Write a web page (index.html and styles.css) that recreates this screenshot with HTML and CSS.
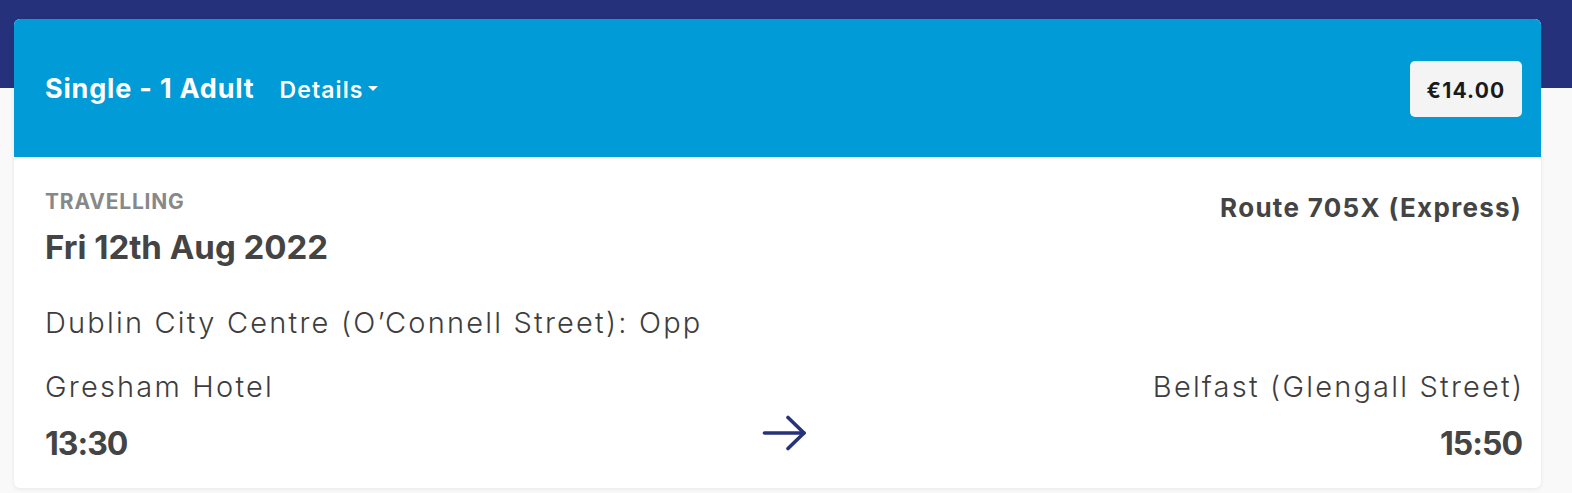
FILE: index.html
```html
<!DOCTYPE html>
<html lang="en">
<head>
<meta charset="utf-8">
<title>Journey</title>
<link rel="stylesheet" href="styles.css">
</head>
<body>
<div class="page">
  <div class="card">
    <div class="card-header">
      <div class="ticket">
        <span class="ticket-title">Single - 1 Adult</span>
        <span class="details">Details<span class="caret"></span></span>
      </div>
      <div class="price">€14.00</div>
    </div>
    <div class="card-body">
      <div class="top-row">
        <div class="when">
          <div class="label">TRAVELLING</div>
          <div class="date">Fri 12th Aug 2022</div>
        </div>
        <div class="route">Route 705X (Express)</div>
      </div>
      <div class="journey">
        <div class="stop">
          <div class="stop-name">Dublin City Centre (O’Connell Street): Opp Gresham Hotel</div>
          <div class="time">13:30</div>
        </div>
        <div class="arrow">
          <svg width="44" height="36" viewBox="0 0 44 36" fill="none" stroke="#263279" stroke-width="3.6" stroke-linecap="round" stroke-linejoin="round">
            <line x1="2.5" y1="18" x2="42" y2="18"/>
            <polyline points="26,2.5 42,18 26,33.5"/>
          </svg>
        </div>
        <div class="stop stop-end">
          <div class="stop-name">Belfast (Glengall Street)</div>
          <div class="time">15:50</div>
        </div>
      </div>
    </div>
  </div>
</div>
</body>
</html>
```
FILE: styles.css
```css
* { box-sizing: border-box; }
html, body { margin: 0; padding: 0; }
body {
  font-family: "Inter", "Liberation Sans", sans-serif;
  color: #444;
  background: #f9f9f9;
}
.page {
  height: 493px;
  background: linear-gradient(#25317b 0, #25317b 88px, #f9f9f9 88px);
  padding: 19px 31px 0 14px;
}
.card {
  background: #fff;
  border-radius: 6px;
  box-shadow: 0 1px 4px rgba(0,0,0,0.08);
  overflow: hidden;
}
.card-header {
  background: #019bd7;
  height: 138px;
  padding: 0 19px 0 31px;
  display: flex;
  align-items: center;
  justify-content: space-between;
}
.ticket {
  display: flex;
  align-items: baseline;
  gap: 25px;
  color: #fff;
}
.ticket-title {
  font-size: 27px;
  font-weight: 700;
  letter-spacing: 0.8px;
}
.details {
  font-size: 23px;
  font-weight: 600;
  letter-spacing: 1.1px;
  display: inline-flex;
  align-items: center;
}
.caret {
  display: inline-block;
  width: 0;
  height: 0;
  margin-left: 4px;
  margin-bottom: 3px;
  border-left: 5px solid transparent;
  border-right: 5px solid transparent;
  border-top: 5px solid #fff;
}
.price {
  background: #f4f4f4;
  color: #1a1a1a;
  border-radius: 5px;
  width: 112px;
  height: 56px;
  margin-top: 2px;
  padding-top: 2px;
  display: flex;
  align-items: center;
  justify-content: center;
  font-size: 21px;
  font-weight: 700;
  letter-spacing: 1.2px;
}
.card-body {
  padding: 34px 19px 20px 31px;
}
.top-row {
  display: flex;
  justify-content: space-between;
  align-items: flex-start;
}
.label {
  font-size: 21px;
  line-height: 21px;
  font-weight: 700;
  color: #888;
  letter-spacing: 0.8px;
}
.date {
  margin-top: 15px;
  font-size: 33px;
  line-height: 40px;
  font-weight: 700;
  color: #444;
}
.route {
  margin-top: 2px;
  font-size: 26px;
  line-height: 30px;
  font-weight: 700;
  letter-spacing: 1.3px;
  color: #444;
}
.journey {
  margin-top: 24px;
  display: grid;
  grid-template-columns: 1fr 44px 1fr;
  align-items: end;
}
.stop {
  display: flex;
  flex-direction: column;
  justify-content: flex-end;
}
.stop-end { text-align: right; }
.stop-name {
  font-size: 29px;
  font-weight: 300;
  line-height: 64px;
  letter-spacing: 2.2px;
  color: #3d3d3d;
}
.stop-end .stop-name { margin-right: -2.2px; }
.time {
  font-size: 32px;
  font-weight: 700;
  line-height: 49px;
  letter-spacing: -1px;
  color: #444;
}
.arrow {
  display: flex;
  justify-content: center;
  padding-bottom: 17px;
}
.arrow svg { display: block; }
```
